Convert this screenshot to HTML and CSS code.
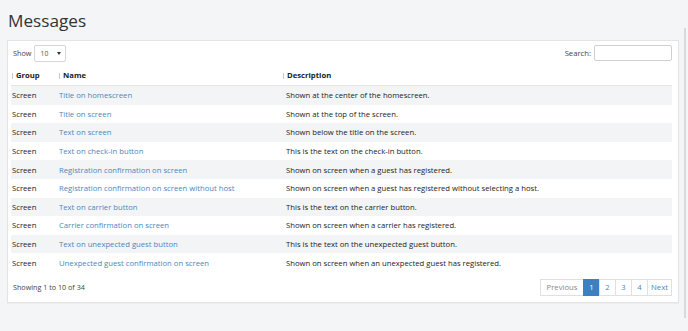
FILE: index.html
```html
<!DOCTYPE html>
<html>
<head>
<meta charset="utf-8">
<link rel="stylesheet" href="styles.css">
</head>
<body>
<div class="page">
  <h1 class="title">Messages</h1>
  <div class="card">
    <div class="toolbar">
      <label class="length">Show
        <span class="select">10<span class="caret"></span></span>
      </label>
      <label class="search">Search: <span class="input"></span></label>
    </div>
    <table class="grid">
      <thead>
        <tr>
          <th class="c-group"><span class="sort"></span>Group</th>
          <th class="c-name"><span class="sort"></span>Name</th>
          <th class="c-desc"><span class="sort"></span>Description</th>
        </tr>
      </thead>
      <tbody>
        <tr><td>Screen</td><td><a>Title on homescreen</a></td><td>Shown at the center of the homescreen.</td></tr>
        <tr><td>Screen</td><td><a>Title on screen</a></td><td>Shown at the top of the screen.</td></tr>
        <tr><td>Screen</td><td><a>Text on screen</a></td><td>Shown below the title on the screen.</td></tr>
        <tr><td>Screen</td><td><a>Text on check-in button</a></td><td>This is the text on the check-in button.</td></tr>
        <tr><td>Screen</td><td><a>Registration confirmation on screen</a></td><td>Shown on screen when a guest has registered.</td></tr>
        <tr><td>Screen</td><td><a>Registration confirmation on screen without host</a></td><td>Shown on screen when a guest has registered without selecting a host.</td></tr>
        <tr><td>Screen</td><td><a>Text on carrier button</a></td><td>This is the text on the carrier button.</td></tr>
        <tr><td>Screen</td><td><a>Carrier confirmation on screen</a></td><td>Shown on screen when a carrier has registered.</td></tr>
        <tr><td>Screen</td><td><a>Text on unexpected guest button</a></td><td>This is the text on the unexpected guest button.</td></tr>
        <tr><td>Screen</td><td><a>Unexpected guest confirmation on screen</a></td><td>Shown on screen when an unexpected guest has registered.</td></tr>
      </tbody>
    </table>
    <div class="footer">
      <div class="info">Showing 1 to 10 of 34</div>
      <ul class="pager">
        <li class="disabled">Previous</li>
        <li class="active">1</li>
        <li>2</li>
        <li>3</li>
        <li>4</li>
        <li class="next">Next</li>
      </ul>
    </div>
  </div>
</div>
<div class="scrollbar"></div>
</body>
</html>
```
FILE: styles.css
```css
html, body {
  margin: 0;
  padding: 0;
  background: #f4f5f7;
  font-family: "Open Sans", "Noto Sans", sans-serif;
  color: #222;
  height: 100%;
}
.page {
  padding: 0 9px 0 7px;
}
.title {
  margin: 0;
  padding: 8px 0 0 1px;
  font-weight: 400;
  font-size: 17.2px;
  line-height: 26px;
  height: 32px;
  color: #333;
}
.card {
  background: #fff;
  border: 1px solid #e3e4e6;
  padding: 3px 6px 6px 3px;
  font-size: 7.7px;
  box-shadow: 0 1px 1px rgba(0,0,0,0.03);
}
.toolbar {
  display: flex;
  justify-content: space-between;
  align-items: center;
  height: 18px;
  margin-bottom: 3px;
}
.length, .search {
  display: flex;
  align-items: center;
  color: #444;
}
.length { padding-left: 2px; font-size: 7.3px; }
.select {
  display: inline-flex;
  align-items: center;
  justify-content: space-between;
  box-sizing: border-box;
  width: 32px;
  height: 17px;
  margin-left: 2px;
  padding: 0 4px 0 6px;
  border: 1px solid #d6d6d6;
  border-radius: 2px;
  font-size: 6.8px;
  color: #555;
}
.caret {
  width: 0; height: 0;
  border-left: 2px solid transparent;
  border-right: 2px solid transparent;
  border-top: 3px solid #333;
}
.input {
  display: inline-block;
  box-sizing: border-box;
  width: 78px;
  height: 16px;
  margin-left: 3px;
  border: 1px solid #d0d0d0;
  border-radius: 2px;
}
.grid {
  width: 100%;
  border-collapse: collapse;
}
.grid th {
  text-align: left;
  font-weight: 700;
  height: 20px;
  padding: 0;
  border-bottom: 1px solid #e6e6e6;
  color: #222;
}
.grid th.c-group { padding-left: 1px; }
.sort {
  display: inline-block;
  width: 1px;
  height: 6px;
  background: #c8c8c8;
  margin-right: 3px;
  vertical-align: -1px;
}
.c-group { width: 47px; }
.c-name { width: 224px; }
.grid td {
  height: 18.6px;
  padding: 0;
  color: #222;
}
.grid td:first-child { padding-left: 1px; }
.grid td:nth-child(3) { padding-left: 3px; }
.grid tbody tr:nth-child(odd) { background: #f3f4f6; }
.grid a { color: #4d86be; }
.footer {
  display: flex;
  justify-content: space-between;
  align-items: center;
  margin-top: 7px;
}
.info { padding-left: 2px; color: #444; font-size: 7.2px; }
.pager {
  display: flex;
  list-style: none;
  margin: 0;
  padding: 0;
}
.pager li {
  box-sizing: border-box;
  height: 17px;
  line-height: 15px;
  padding: 0;
  width: 17px;
  text-align: center;
  border: 1px solid #e0e0e0;
  margin-left: -1px;
  color: #4d86be;
  background: #fff;
}
.pager li.disabled { color: #888; width: 44px; }
.pager li.next { width: 25px; }
.pager li.active { background: #3a80c2; border-color: #3a80c2; color: #fff; }
.scrollbar {
  position: absolute;
  top: 28px;
  right: 2px;
  width: 2px;
  height: 290px;
  background: #d8d9db;
}
```
